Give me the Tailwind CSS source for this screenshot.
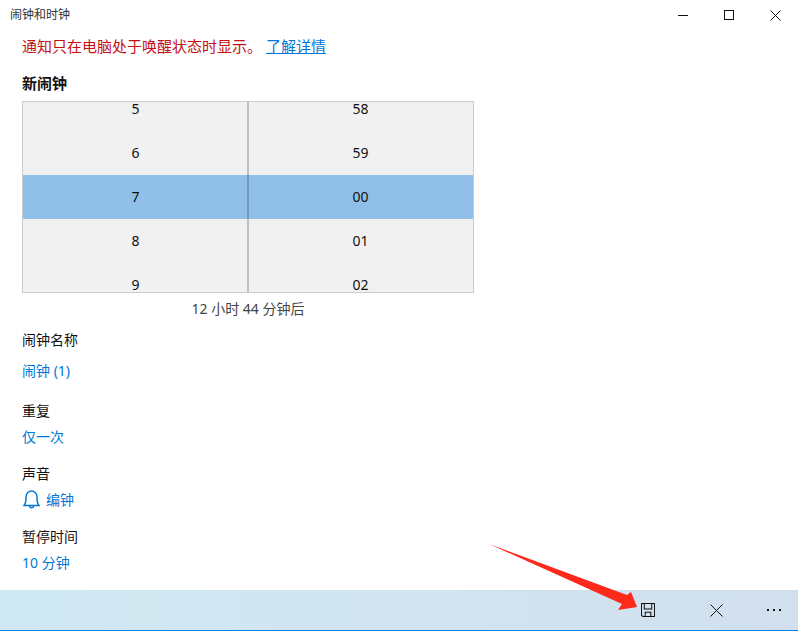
<!DOCTYPE html>
<html lang="zh-CN">
<head>
<meta charset="UTF-8">
<title>闹钟和时钟</title>
<script src="https://cdn.jsdelivr.net/npm/@tailwindcss/browser@4"></script>
</head>
<body class="bg-white">
<div class="relative w-[798px] h-[631px] overflow-hidden flex flex-col text-[14px] text-[#111] font-['Noto_Sans','Noto_Sans_CJK_SC',sans-serif]">
  <!-- title bar -->
  <header class="h-[30px] shrink-0 flex items-center justify-between">
    <span class="pl-[10px] text-[12px] text-[#333]">闹钟和时钟</span>
    <div class="flex items-center h-full">
      <div class="w-[46px] h-full flex items-center justify-center"><svg width="10" height="10" viewBox="0 0 10 10"><path d="M0 5.5H10" stroke="#111" fill="none"/></svg></div>
      <div class="w-[46px] h-full flex items-center justify-center"><svg width="10" height="10" viewBox="0 0 10 10"><rect x=".5" y=".5" width="9" height="9" stroke="#111" fill="none"/></svg></div>
      <div class="w-[46px] h-full flex items-center justify-center"><svg width="11" height="11" viewBox="0 0 11 11"><path d="M.5 .5L10.5 10.5M10.5 .5L.5 10.5" stroke="#111" fill="none"/></svg></div>
    </div>
  </header>

  <main class="flex-1 pl-[22px]">
    <p class="mt-[5px] h-[22px] leading-[22px] text-[15px] text-[#c50f0f]">通知只在电脑处于唤醒状态时显示。<a href="#" class="ml-[4px] text-[#0078d7] underline">了解详情</a></p>
    <h2 class="mt-[15px] h-[22px] leading-[22px] text-[15px] font-bold">新闹钟</h2>

    <div class="relative mt-[7px] w-[452px] h-[192px] border border-[#ccc] bg-[#f1f1f1] overflow-hidden">
      <div class="-mt-[15px] grid grid-cols-2 text-center leading-[43px]">
        <div class="h-[44px]">5</div><div class="h-[44px]">58</div>
        <div class="h-[44px]">6</div><div class="h-[44px]">59</div>
        <div class="h-[44px] bg-[#90c0e8]">7</div><div class="h-[44px] bg-[#90c0e8]">00</div>
        <div class="h-[44px]">8</div><div class="h-[44px]">01</div>
        <div class="h-[44px]">9</div><div class="h-[44px]">02</div>
      </div>
      <div class="absolute top-0 bottom-0 left-[224px] w-[2px] bg-black/20"></div>
    </div>
    <p class="w-[452px] mt-[6px] h-[20px] leading-[20px] text-center text-[14px] text-[#444]">12 小时 44 分钟后</p>

    <div class="mt-[10px] h-[22px] leading-[22px]">闹钟名称</div>
    <div class="mt-[9px] h-[22px] leading-[22px] text-[#0078d7]">闹钟 (1)</div>
    <div class="mt-[18px] h-[22px] leading-[22px]">重复</div>
    <div class="mt-[4px] h-[22px] leading-[22px] text-[#0078d7]">仅一次</div>
    <div class="mt-[15px] h-[22px] leading-[22px]">声音</div>
    <div class="mt-[3px] h-[22px] flex items-center gap-[6px] text-[#0078d7]">
      <svg class="ml-[1px]" width="17" height="19" viewBox="0 0 17 19" fill="none" stroke="#0078d7" stroke-width="1.5"><path d="M1 15.5C3 13.5 3 11 3 7C3 3.5 5.5 1 8.5 1S14 3.5 14 7C14 11 14 13.5 16 15.5Z"/><path d="M6.5 15.5C6.5 18.5 10.5 18.5 10.5 15.5"/></svg>
      <span>编钟</span>
    </div>
    <div class="mt-[16px] h-[22px] leading-[22px]">暂停时间</div>
    <div class="mt-[4px] h-[22px] leading-[22px] text-[#0078d7]">10 分钟</div>
  </main>

  <!-- command bar -->
  <footer class="h-[41px] shrink-0 flex items-center justify-end border-b border-[#0a84e0] bg-gradient-to-r from-[#cfe8f1] to-[#d2e0ee]">
    <div class="w-[46px] flex justify-center"><svg width="14" height="14" viewBox="0 0 15 15" fill="none" stroke="#111" stroke-width="1.1"><path d="M.5 .5H14.5V14.5H2L.5 13Z"/><path d="M3.5 .5V6.5H11.5V.5"/><path d="M4.5 14.5V10H10.5V14.5"/></svg></div>
    <div class="w-[46px] ml-[22px] flex justify-center"><svg width="13" height="13" viewBox="0 0 13 13" fill="none" stroke="#111"><path d="M.5 .5L12.5 12.5M12.5 .5L.5 12.5"/></svg></div>
    <div class="w-[48px] ml-[11px] flex justify-center gap-[4px]">
      <span class="w-[2px] h-[2px] bg-[#111]"></span><span class="w-[2px] h-[2px] bg-[#111]"></span><span class="w-[2px] h-[2px] bg-[#111]"></span>
    </div>
  </footer>

  <!-- red annotation arrow -->
  <svg class="absolute left-0 top-0 pointer-events-none" width="798" height="631" viewBox="0 0 798 631"><polygon points="489,544 627,595 631,592 637,607 618,610 622,604" fill="#fd2a1c"/></svg>
</div>
</body>
</html>
